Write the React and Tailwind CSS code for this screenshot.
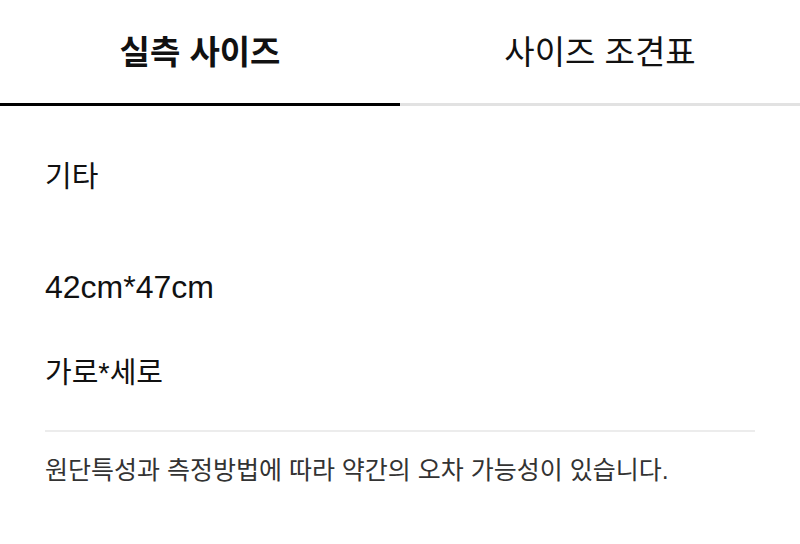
import React from 'react';

const tabs = [
  { label: '실측 사이즈', active: true },
  { label: '사이즈 조견표', active: false },
];

const App = () => {
  return (
    <div
      className="w-[800px] h-[544px] bg-white overflow-hidden text-[#111]"
      style={{ fontFamily: '"Liberation Sans", "Noto Sans CJK KR", sans-serif' }}
    >
      <div className="flex">
        {tabs.map((tab) => (
          <div
            key={tab.label}
            className={`flex-1 h-[106px] flex items-center justify-center pt-[1px] border-b-[3px] ${
              tab.active ? 'border-black font-bold' : 'border-[#e2e2e2] font-normal'
            }`}
          >
            <span className="text-[33px] leading-none">{tab.label}</span>
          </div>
        ))}
      </div>

      <div className="px-[45px]">
        <p className="mt-[55px] text-[29px] leading-[32px]">기타</p>
        <p className="mt-[78px] text-[32px] leading-[32px]">42cm*47cm</p>
        <p className="mt-[54px] text-[29px] leading-[32px]">가로*세로</p>
        <div className="mt-[41px] w-[710px] border-t-2 border-[#ececec]" />
        <p className="mt-[24px] text-[25px] leading-[28px] text-[#333]">
          원단특성과 측정방법에 따라 약간의 오차 가능성이 있습니다.
        </p>
      </div>
    </div>
  );
};

export default App;
